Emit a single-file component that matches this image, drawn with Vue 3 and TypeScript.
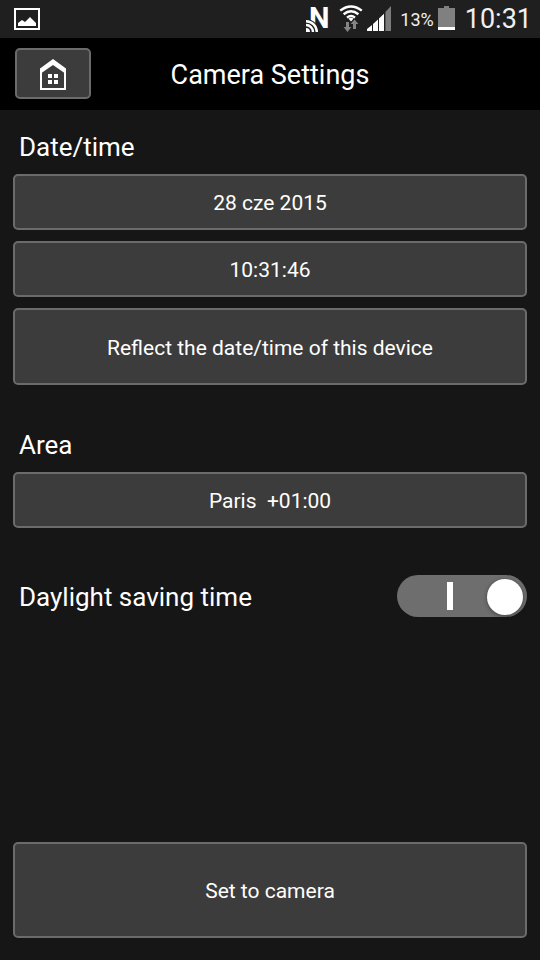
<script setup lang="ts">
import { ref } from 'vue'

const date = ref('28 cze 2015')
const time = ref('10:31:46')
const area = ref('Paris\u00a0 +01:00')
const daylightSaving = ref(true)
</script>

<template>
  <div class="screen">
    <div class="status">
      <svg class="picture" width="26" height="22" viewBox="0 0 26 22" aria-hidden="true">
        <rect x="1" y="1" width="24" height="20" fill="none" stroke="#fff" stroke-width="2" />
        <path d="M4 18V15L8 12L11 14L16 9L22 15V18Z" fill="#fff" />
      </svg>
      <svg class="nfc" width="24" height="32" viewBox="0 0 24 32" aria-hidden="true">
        <text x="3" y="28" class="nfc-letter">N</text>
        <path d="M0 19A13 13 0 0 1 13 32H0Z" fill="#1f1f1f" />
        <g fill="none" stroke="#fff" stroke-width="2.4">
          <path d="M0 21.2A10.8 10.8 0 0 1 10.8 32" />
          <path d="M0 25A7 7 0 0 1 7 32" />
        </g>
        <path d="M0 28A4 4 0 0 1 4 32H0Z" fill="#fff" />
      </svg>
      <svg class="wifi" width="24" height="28" viewBox="0 0 24 28" aria-hidden="true">
        <g fill="none" stroke="#fff" stroke-width="2.4">
          <path d="M1.2 5.6Q12 -2.8 22.8 5.6" />
          <path d="M4.6 9.2Q12 3.4 19.4 9.2" />
          <path d="M8 12.6Q12 9.4 16 12.6" />
        </g>
        <path d="M9.4 13.6Q12 12 14.6 13.6L12 16.4Z" fill="#fff" />
        <path d="M7 17H10V22H12.4L8.5 27L4.6 22H7Z" fill="#858585" />
        <path d="M14 24V19H11.6L15.5 14.6L19.4 19H17V24Z" fill="#858585" />
      </svg>
      <svg class="signal" width="24" height="25" viewBox="0 0 24 25" aria-hidden="true">
        <path d="M0 25V23L5 19V25ZM6 25V18L11 13.4V25ZM12 25V12.5L17 7.8V25Z" fill="#fff" />
        <path d="M18.4 25V6L24 0V25Z" fill="#7c7c7c" />
      </svg>
      <span class="percent">13%</span>
      <svg class="battery" width="17" height="24" viewBox="0 0 17 24" aria-hidden="true">
        <path d="M6 0H11V2H17V21H0V2H6Z" fill="#808080" />
        <path d="M0 21H17V24H0Z" fill="#fff" />
      </svg>
      <span class="clock">10:31</span>
    </div>

    <header class="header">
      <button class="button home" type="button" aria-label="Home">
        <svg width="26" height="31" viewBox="0 0 26 31" aria-hidden="true">
          <path d="M1 10V30H25V10" fill="none" stroke="#fff" stroke-width="2" />
          <path d="M0 9.5L13 0L26 9.5V15L13 6L0 15Z" fill="#fff" />
          <path d="M8 15H12V19H8ZM14 15H18V19H14ZM8 21H12V25H8ZM14 21H18V25H14Z" fill="#fff" />
        </svg>
      </button>
      <h1 class="title">Camera Settings</h1>
    </header>

    <main class="content">
      <section class="group">
        <h2 class="label">Date/time</h2>
        <button class="button row" type="button">{{ date }}</button>
        <button class="button row" type="button">{{ time }}</button>
        <button class="button row tall" type="button">Reflect the date/time of this device</button>
      </section>

      <section class="group area">
        <h2 class="label">Area</h2>
        <button class="button row" type="button">{{ area }}</button>
      </section>

      <div class="setting">
        <label class="label" for="daylight">Daylight saving time</label>
        <input id="daylight" v-model="daylightSaving" class="switch" type="checkbox" role="switch" />
      </div>

      <button class="button submit" type="button">Set to camera</button>
    </main>
  </div>
</template>

<style>
body {
  margin: 0;
  background: #161616;
}
</style>

<style scoped>
.screen {
  box-sizing: border-box;
  display: flex;
  flex-direction: column;
  min-height: 100vh;
  background: #161616;
  color: #fff;
  font-family: Roboto, "Liberation Sans", sans-serif;
}

.status {
  display: flex;
  align-items: center;
  box-sizing: border-box;
  height: 38px;
  padding: 0 8px 0 14px;
  background: #1f1f1f;
  color: #f0f0f0;
}

.status svg {
  flex: none;
  overflow: visible;
}

.nfc {
  margin-left: auto;
  margin-bottom: 6px;
}

.nfc-letter {
  fill: #fff;
  font-size: 29px;
  font-weight: 700;
}

.wifi {
  margin-left: 9px;
}

.signal {
  margin-bottom: 2px;
  margin-left: 4px;
}

.percent {
  margin-left: 9px;
  font-size: 18px;
}

.battery {
  margin-bottom: 2px;
  margin-left: 4px;
}

.clock {
  margin-left: 10px;
  font-size: 27px;
  line-height: 38px;
}

.header {
  display: grid;
  grid-template-columns: 76px 1fr 76px;
  align-items: start;
  box-sizing: border-box;
  height: 72px;
  padding: 10px 15px;
  background: #000;
}

.title {
  margin: 0;
  text-align: center;
  font-size: 27px;
  font-weight: 400;
  line-height: 54px;
}

.button {
  box-sizing: border-box;
  margin: 0;
  padding: 2px 0 0;
  border: 2px solid #6b6b6b;
  border-radius: 5px;
  background: #3c3c3c;
  color: #fff;
  font-family: inherit;
  font-size: 21px;
  line-height: 26px;
  cursor: pointer;
}

.home {
  display: flex;
  align-items: center;
  justify-content: center;
  height: 51px;
}

.content {
  display: flex;
  flex: 1;
  flex-direction: column;
  padding: 20px 13px 22px;
}

.group {
  display: flex;
  flex-direction: column;
  gap: 11px;
}

.label {
  margin: 0;
  padding: 1px 0 0 6px;
  font-size: 26px;
  font-weight: 400;
  line-height: 32px;
}

.row {
  height: 56px;
}

.tall {
  height: 77px;
}

.area {
  margin-top: 43px;
}

.setting {
  display: flex;
  align-items: center;
  justify-content: space-between;
  margin-top: 47px;
}

.switch {
  appearance: none;
  box-sizing: border-box;
  display: flex;
  align-items: center;
  justify-content: space-between;
  flex: none;
  width: 130px;
  height: 42px;
  margin: 0;
  padding: 0 4px;
  border-radius: 21px;
  background: #6e6e6e;
  cursor: pointer;
}

.switch::before {
  content: "";
  flex: none;
  width: 6px;
  height: 28px;
  margin-left: 46px;
  background: #fff;
}

.switch::after {
  content: "";
  flex: none;
  width: 36px;
  height: 36px;
  margin-top: 2px;
  border-radius: 50%;
  background: #fff;
  box-shadow: 0 1px 4px rgb(0 0 0 / 40%);
}

.switch:not(:checked) {
  flex-direction: row-reverse;
  background: #3c3c3c;
}

.switch:not(:checked)::before {
  visibility: hidden;
}

.submit {
  height: 96px;
  margin-top: auto;
}
</style>
